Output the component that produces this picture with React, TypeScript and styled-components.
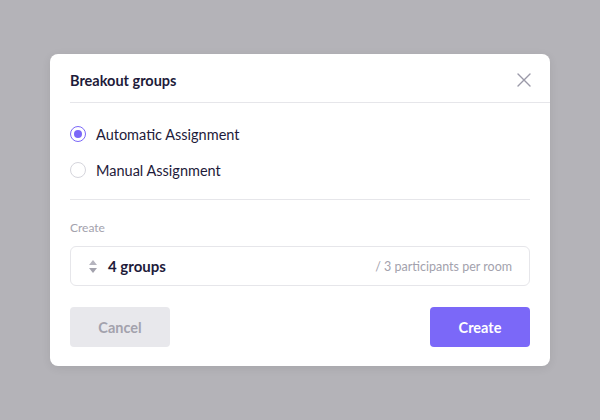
import React from "react";
import styled, { createGlobalStyle } from "styled-components";

const Global = createGlobalStyle`
  html, body { margin: 0; padding: 0; }
  body {
    width: 600px; height: 420px; background: #b4b3b8;
    font-family: "Lato", "Open Sans", sans-serif;
  }
  #root { height: 420px; }
`;

const Page = styled.div`
  height: 420px;
  display: flex;
  align-items: flex-start;
  justify-content: center;
  padding-top: 54px;
  box-sizing: border-box;
`;

const Dialog = styled.div`
  width: 500px;
  background: #fff;
  border-radius: 8px;
  box-shadow: 0 2px 10px rgba(0,0,0,0.08);
`;

const Header = styled.div`
  display: flex;
  align-items: center;
  justify-content: space-between;
  height: 49px;
  box-sizing: border-box;
  padding-top: 4px;
  margin-left: 20px;
  padding-right: 18px;
  border-bottom: 1px solid #e6e6ea;
`;

const Title = styled.h2`
  margin: 0;
  font-size: 14.5px;
  font-weight: 700;
  color: #1e1b3a;
`;

const Close = styled.button`
  border: 0; background: none; padding: 0;
  width: 16px; height: 16px;
  display: flex; align-items: center; justify-content: center;
`;

const Body = styled.div`
  padding: 0 20px 19px;
`;

const Options = styled.div`
  display: flex;
  flex-direction: column;
  gap: 20px;
  padding: 23px 0 21px;
  border-bottom: 1px solid #e6e6ea;
`;

const Option = styled.label`
  display: flex;
  align-items: center;
  gap: 10px;
  height: 16px;
  font-size: 14.5px;
  color: #1e1b3a;
`;

const Radio = styled.span<{ $checked?: boolean }>`
  width: 16px; height: 16px;
  box-sizing: border-box;
  border-radius: 50%;
  border: 1.5px solid ${p => (p.$checked ? "#7b68f8" : "#d5d5dc")};
  display: flex; align-items: center; justify-content: center;
  &::after {
    content: "";
    width: 8px; height: 8px; border-radius: 50%;
    background: ${p => (p.$checked ? "#7b68f8" : "transparent")};
  }
`;

const Label = styled.div`
  margin-top: 21px;
  font-size: 12px;
  color: #a3a2ad;
  line-height: 14px;
`;

const Field = styled.div`
  margin-top: 11px;
  height: 40px;
  box-sizing: border-box;
  border: 1px solid #e6e6ea;
  border-radius: 6px;
  display: flex;
  align-items: center;
  padding: 0 17px 0 18px;
`;

const Stepper = styled.span`
  display: flex; flex-direction: column; gap: 3px;
  margin-right: 11px;
`;

const Value = styled.span`
  font-size: 15px;
  font-weight: 700;
  color: #1e1b3a;
  flex: 1;
`;

const Hint = styled.span`
  font-size: 12.5px;
  color: #a3a2ad;
`;

const Actions = styled.div`
  margin-top: 21px;
  display: flex;
  justify-content: space-between;
`;

const Button = styled.button<{ $primary?: boolean }>`
  width: 100px; height: 40px;
  border: 0; border-radius: 4px;
  font-family: inherit;
  font-size: 14.5px;
  font-weight: 700;
  background: ${p => (p.$primary ? "#7b68f8" : "#e8e8ec")};
  color: ${p => (p.$primary ? "#ffffff" : "#a3a2ad")};
`;

export default function App() {
  return (
    <>
      <Global />
      <Page>
        <Dialog>
          <Header>
            <Title>Breakout groups</Title>
            <Close aria-label="Close">
              <svg width="14" height="14" viewBox="0 0 14 14">
                <path d="M1 1L13 13M13 1L1 13" stroke="#9a99a8" strokeWidth="1.4" strokeLinecap="round" />
              </svg>
            </Close>
          </Header>
          <Body>
            <Options>
              <Option><Radio $checked />Automatic Assignment</Option>
              <Option><Radio />Manual Assignment</Option>
            </Options>
            <Label>Create</Label>
            <Field>
              <Stepper>
                <svg width="8" height="5" viewBox="0 0 8 5"><path d="M4 0L8 5H0Z" fill="#b5b4be" /></svg>
                <svg width="8" height="5" viewBox="0 0 8 5"><path d="M0 0H8L4 5Z" fill="#a3a2ad" /></svg>
              </Stepper>
              <Value>4 groups</Value>
              <Hint>/ 3 participants per room</Hint>
            </Field>
            <Actions>
              <Button>Cancel</Button>
              <Button $primary>Create</Button>
            </Actions>
          </Body>
        </Dialog>
      </Page>
    </>
  );
}
